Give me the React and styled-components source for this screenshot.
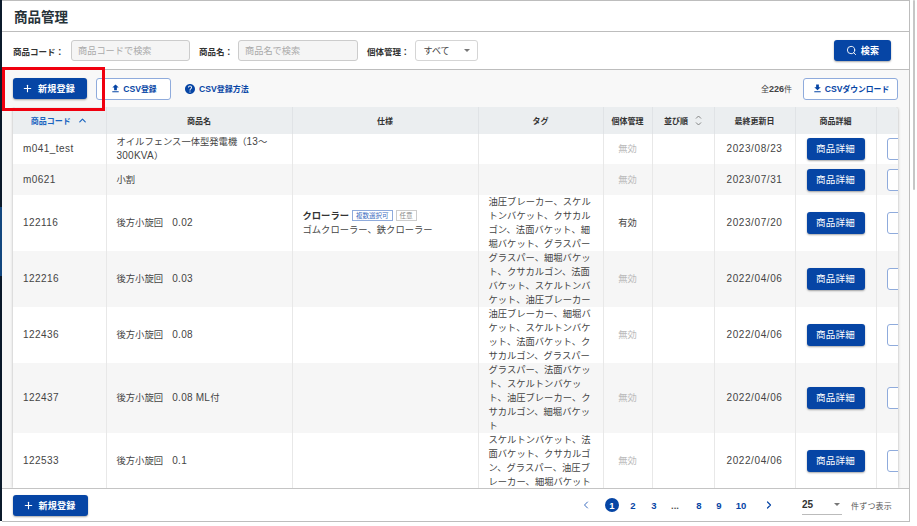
import styled, { createGlobalStyle } from "styled-components";
import { ChevronLeft, ChevronRight, ChevronUp, Plus, Search } from "lucide-react";
import { MdFileDownload, MdFileUpload, MdHelp } from "react-icons/md";

const GlobalStyle = createGlobalStyle`
    html, body {
        margin: 0;
        background: #fff;
        overflow: hidden;
    }
    * {
        box-sizing: border-box;
    }
    body {
        font-family: "Liberation Sans", "Noto Sans CJK JP", sans-serif;
        color: #333;
    }
`;

const Screen = styled.div`
    position: relative;
    display: flex;
    width: 917px;
    height: 526px;
    overflow: hidden;
`;

const SideStrip = styled.div`
    flex: 0 0 2px;
    height: 521px;
    background: linear-gradient(
        #0b1a2b 0,
        #0b1a2b 207px,
        #12477f 207px,
        #12477f 276px,
        #0b1a2b 276px
    );
`;

const Panel = styled.main`
    flex: 0 0 907px;
    height: 522px;
    display: flex;
    flex-direction: column;
    border-top: 1px solid #bdbdbd;
    border-right: 1px solid #bdbdbd;
    border-bottom: 1px solid #bdbdbd;
`;

const TitleBar = styled.header`
    flex: 0 0 31px;
    display: flex;
    align-items: center;
    padding-left: 12px;
    border-bottom: 1px solid #bdbdbd;
`;

const Title = styled.h1`
    margin: 0;
    font-size: 13.5px;
    font-weight: 700;
    color: #263238;
`;

const SearchBar = styled.form`
    flex: 0 0 38px;
    display: flex;
    align-items: center;
    padding: 0 18px 0 11px;
    border-bottom: 1px solid #bdbdbd;
`;

const FieldLabel = styled.label`
    margin-right: ${(p) => p.$gap}px;
    font-size: 8.5px;
    font-weight: 700;
    color: #333;
    white-space: nowrap;
`;

const TextInput = styled.input`
    width: ${(p) => p.$width}px;
    height: 21px;
    margin-right: 9px;
    padding: 0 6px;
    border: 1px solid #ccc;
    border-radius: 3px;
    background: #f5f5f5;
    font: inherit;
    font-size: 9.2px;
    &::placeholder {
        color: #aaa;
    }
`;

const FakeSelect = styled.div`
    display: flex;
    align-items: center;
    justify-content: space-between;
    width: 63px;
    height: 21px;
    padding: 0 7px 0 8px;
    border: 1px solid #d5d5d5;
    border-radius: 3px;
    background: #fff;
    font-size: 9px;
    color: #444;
`;

const Caret = styled.span`
    width: 0;
    height: 0;
    border-left: 3px solid transparent;
    border-right: 3px solid transparent;
    border-top: 3px solid #777;
`;

const PrimaryButton = styled.button`
    display: inline-flex;
    align-items: center;
    justify-content: center;
    gap: ${(p) => p.$gap || 4}px;
    width: ${(p) => p.$width}px;
    height: 21px;
    margin-left: ${(p) => (p.$push ? "auto" : "0")};
    padding: 0 ${(p) => p.$trim || 0}px 0 0;
    border: 0;
    border-radius: 3px;
    background: #0645a5;
    box-shadow: 0 1px 2px rgba(0, 0, 0, 0.35);
    color: #fff;
    font: inherit;
    font-size: 9px;
    font-weight: 700;
    letter-spacing: 0.2px;
`;

const OutlineButton = styled.button`
    display: inline-flex;
    align-items: center;
    justify-content: center;
    gap: 2px;
    width: ${(p) => p.$width}px;
    height: 22px;
    margin-left: ${(p) => p.$left || 0}px;
    padding: 0;
    border: 1px solid #8fabdc;
    border-radius: 3px;
    background: #fff;
    color: #0645a5;
    font: inherit;
    font-size: 7.8px;
    font-weight: 700;
`;

const CsvMark = styled.span`
    font-size: 8.6px;
`;

const Toolbar = styled.div`
    flex: 0 0 37px;
    display: flex;
    align-items: center;
    padding: 0 11px 0 11px;
    background: #f8f8f8;
`;

const HelpLink = styled.a`
    display: inline-flex;
    align-items: center;
    gap: 3px;
    margin-left: 13px;
    color: #0645a5;
    font-size: 8px;
    font-weight: 700;
`;

const CountLabel = styled.span`
    margin-left: auto;
    margin-right: 11px;
    font-size: 8px;
    color: #444;
    b {
        font-size: 9px;
        font-weight: 700;
    }
`;

const TableArea = styled.div`
    flex: 1;
    min-height: 0;
    padding: 0 11px;
    overflow: hidden;
    background: #f8f8f8;
`;

const TableCard = styled.div`
    width: 885px;
    height: 100%;
    overflow: hidden;
    border-radius: 4px 4px 0 0;
    background: #fff;
    box-shadow: 0 0 3px rgba(0, 0, 0, 0.3);
`;

const Table = styled.table`
    width: 885px;
    table-layout: fixed;
    border-collapse: collapse;
    font-size: 9.3px;
`;

const HeadCell = styled.th`
    height: 27px;
    padding: 0;
    background: #ebeef0;
    border-left: 1px solid #e0e3e6;
    color: ${(p) => (p.$active ? "#1a65c0" : "#333")};
    font-size: 8px;
    font-weight: 700;
    text-align: center;
    &:first-child {
        border-left: 0;
    }
`;

const HeadInner = styled.span`
    display: inline-flex;
    align-items: center;
    gap: ${(p) => p.$gap}px;
`;

const Row = styled.tr`
    height: ${(p) => p.$height}px;
    background: ${(p) => (p.$striped ? "#f6f6f6" : "#fff")};
`;

const Cell = styled.td`
    padding: 0 ${(p) => p.$pad ?? 10}px;
    border-left: 1px solid #e8e8e8;
    color: ${(p) => p.$color || "#444"};
    font-size: ${(p) => p.$size || 9.3}px;
    letter-spacing: ${(p) => p.$spacing || 0}px;
    line-height: 14px;
    text-align: ${(p) => p.$align || "left"};
    vertical-align: middle;
    &:first-child {
        border-left: 0;
    }
`;

const Latin = styled.span`
    font-size: 10px;
    letter-spacing: 0.25px;
`;

const ClipCell = styled.td`
    padding: 0 0 0 10px;
    border-left: 1px solid #e8e8e8;
    overflow: hidden;
`;

const DetailButton = styled(PrimaryButton)`
    display: flex;
    margin: 0 auto;
    width: 58px;
    height: 22px;
    font-size: 9.5px;
    font-weight: 400;
    letter-spacing: 0.3px;
`;

const StubButton = styled.div`
    width: 30px;
    height: 22px;
    border: 1px solid #8fabdc;
    border-radius: 3px;
    background: #fff;
`;

const SpecName = styled.b`
    font-weight: 700;
    color: #333;
    margin-right: 3px;
`;

const Badge = styled.span`
    display: inline-block;
    margin-right: 3px;
    padding: 0 3px;
    height: 11px;
    line-height: 9px;
    border: 1px solid ${(p) => (p.$blue ? "#8fabdc" : "#ccc")};
    color: ${(p) => (p.$blue ? "#3a6cc0" : "#888")};
    font-size: 6.5px;
    vertical-align: 1px;
`;

const Footer = styled.footer`
    flex: 0 0 33px;
    display: flex;
    align-items: center;
    padding: 0 11px;
    background: #fff;
    border-top: 1px solid #c4c4c4;
`;

const Pager = styled.nav`
    display: flex;
    align-items: center;
    margin-left: auto;
    color: #0645a5;
`;

const PrevIcon = styled(ChevronLeft)`
    margin-right: 13px;
    color: #3a6cc0;
`;

const PageNum = styled.span`
    display: flex;
    align-items: center;
    justify-content: center;
    width: ${(p) => p.$width || 14}px;
    height: 14px;
    margin-right: ${(p) => p.$gap ?? 7}px;
    border-radius: 50%;
    background: ${(p) => (p.$current ? "#0645a5" : "transparent")};
    color: ${(p) => (p.$current ? "#fff" : p.$muted ? "#555" : "#0645a5")};
    font-size: 9.5px;
    font-weight: 700;
`;

const PageSize = styled.div`
    display: flex;
    align-items: center;
    justify-content: space-between;
    width: 40px;
    height: 20px;
    margin: 0 9px 0 27px;
    padding: 0 2px 0 0;
    border-bottom: 1px solid #bbb;
    font-size: 10px;
    font-weight: 700;
    color: #333;
`;

const PerPageLabel = styled.span`
    margin-right: 6px;
    font-size: 8px;
    color: #555;
    letter-spacing: 0.2px;
`;

const Gutter = styled.div`
    flex: 1;
    padding: 0 3px 0 3px;
`;

const ScrollThumb = styled.div`
    width: 2px;
    height: 190px;
    border-radius: 1px;
    background: #c6c6c6;
`;

// 赤枠はスクリーンショット上の注釈
const Callout = styled.div`
    position: absolute;
    left: 2px;
    top: 67px;
    width: 103px;
    height: 44px;
    border: 3px solid #f0000f;
    pointer-events: none;
`;

const rows = [
    { code: "m041_test", name: <>オイルフェンス一体型発電機（<Latin>13</Latin>〜<Latin>300KVA</Latin>）</>, tag: "", valid: false, date: "2023/08/23", height: 30 },
    { code: "m0621", name: "小割", tag: "", valid: false, date: "2023/07/31", height: 31 },
    { code: "122116", name: <>後方小旋回　<Latin>0.02</Latin></>, spec: true, tag: "油圧ブレーカー、スケルトンバケット、クサカルゴン、法面バケット、細堀バケット、グラスパー", valid: true, date: "2023/07/20", height: 56 },
    { code: "122216", name: <>後方小旋回　<Latin>0.03</Latin></>, tag: "グラスパー、細堀バケット、クサカルゴン、法面バケット、スケルトンバケット、油圧ブレーカー", valid: false, date: "2022/04/06", height: 56 },
    { code: "122436", name: <>後方小旋回　<Latin>0.08</Latin></>, tag: "油圧ブレーカー、細堀バケット、スケルトンバケット、法面バケット、クサカルゴン、グラスパー", valid: false, date: "2022/04/06", height: 56 },
    { code: "122437", name: <>後方小旋回　<Latin>0.08 ML</Latin>付</>, tag: "グラスパー、法面バケット、スケルトンバケット、油圧ブレーカー、クサカルゴン、細堀バケット", valid: false, date: "2022/04/06", height: 70 },
    { code: "122533", name: <>後方小旋回　<Latin>0.1</Latin></>, tag: "スケルトンバケット、法面バケット、クサカルゴン、グラスパー、油圧ブレーカー、細堀バケット", valid: false, date: "2022/04/06", height: 56 },
];

const columnWidths = [93, 186, 186, 125, 49, 62, 81, 81, 22];

function SortIcon() {
    return (
        <svg width="7" height="11" viewBox="0 0 7 11" fill="none" stroke="#777" strokeWidth="0.9">
            <path d="M1 3.5 3.5 1 6 3.5" />
            <path d="M1 7.5 3.5 10 6 7.5" />
        </svg>
    );
}

function ProductRow({ row, striped }) {
    return (
        <Row $height={row.height} $striped={striped}>
            <Cell $size={10} $spacing={0.45}>{row.code}</Cell>
            <Cell>{row.name}</Cell>
            <Cell>
                {row.spec && (
                    <>
                        <SpecName>クローラー</SpecName>
                        <Badge $blue>複数選択可</Badge>
                        <Badge>任意</Badge>
                        <br />
                        ゴムクローラー、鉄クローラー
                    </>
                )}
            </Cell>
            <Cell>{row.tag}</Cell>
            <Cell $align="center" $pad={0} $color={row.valid ? "#444" : "#bbb"}>
                {row.valid ? "有効" : "無効"}
            </Cell>
            <Cell />
            <Cell $align="center" $pad={0} $size={10} $spacing={0.6}>{row.date}</Cell>
            <Cell $pad={0}>
                <DetailButton type="button">商品詳細</DetailButton>
            </Cell>
            <ClipCell>
                <StubButton />
            </ClipCell>
        </Row>
    );
}

export default function App() {
    return (
        <Screen>
            <GlobalStyle />
            <SideStrip />
            <Panel>
                <TitleBar>
                    <Title>商品管理</Title>
                </TitleBar>
                <SearchBar>
                    <FieldLabel $gap={7}>商品コード：</FieldLabel>
                    <TextInput $width={119} placeholder="商品コードで検索" />
                    <FieldLabel $gap={5}>商品名：</FieldLabel>
                    <TextInput $width={120} placeholder="商品名で検索" />
                    <FieldLabel $gap={5}>個体管理：</FieldLabel>
                    <FakeSelect>
                        すべて
                        <Caret />
                    </FakeSelect>
                    <PrimaryButton type="button" $width={57} $push>
                        <Search size={11} strokeWidth={2} />
                        検索
                    </PrimaryButton>
                </SearchBar>
                <Toolbar>
                    <PrimaryButton type="button" $width={74} $gap={5} $trim={3}>
                        <Plus size={11} strokeWidth={2.4} />
                        新規登録
                    </PrimaryButton>
                    <OutlineButton type="button" $width={75} $left={9}>
                        <MdFileUpload size={11} />
                        <span><CsvMark>CSV</CsvMark>登録</span>
                    </OutlineButton>
                    <HelpLink>
                        <MdHelp size={12} />
                        <span><CsvMark>CSV</CsvMark>登録方法</span>
                    </HelpLink>
                    <CountLabel>
                        全<b>226</b>件
                    </CountLabel>
                    <OutlineButton type="button" $width={95}>
                        <MdFileDownload size={11} />
                        <span><CsvMark>CSV</CsvMark>ダウンロード</span>
                    </OutlineButton>
                </Toolbar>
                <TableArea>
                    <TableCard>
                        <Table>
                            <colgroup>
                                {columnWidths.map((width, i) => (
                                    <col key={i} width={width} />
                                ))}
                            </colgroup>
                            <thead>
                                <tr>
                                    <HeadCell $active>
                                        <HeadInner $gap={6}>
                                            商品コード
                                            <ChevronUp size={11} strokeWidth={2.6} />
                                        </HeadInner>
                                    </HeadCell>
                                    <HeadCell>商品名</HeadCell>
                                    <HeadCell>仕様</HeadCell>
                                    <HeadCell>タグ</HeadCell>
                                    <HeadCell>個体管理</HeadCell>
                                    <HeadCell>
                                        <HeadInner $gap={7}>
                                            並び順
                                            <SortIcon />
                                        </HeadInner>
                                    </HeadCell>
                                    <HeadCell>最終更新日</HeadCell>
                                    <HeadCell>商品詳細</HeadCell>
                                    <HeadCell />
                                </tr>
                            </thead>
                            <tbody>
                                {rows.map((row, i) => (
                                    <ProductRow key={row.code} row={row} striped={i % 2 === 1} />
                                ))}
                            </tbody>
                        </Table>
                    </TableCard>
                </TableArea>
                <Footer>
                    <PrimaryButton type="button" $width={75} $gap={5} $trim={3}>
                        <Plus size={11} strokeWidth={2.4} />
                        新規登録
                    </PrimaryButton>
                    <Pager>
                        <PrevIcon size={12} strokeWidth={2} />
                        <PageNum $current>1</PageNum>
                        <PageNum>2</PageNum>
                        <PageNum>3</PageNum>
                        <PageNum $muted $gap={10}>...</PageNum>
                        <PageNum $gap={6}>8</PageNum>
                        <PageNum $gap={6}>9</PageNum>
                        <PageNum $width={18} $gap={13}>10</PageNum>
                        <ChevronRight size={12} strokeWidth={2.4} />
                    </Pager>
                    <PageSize>
                        25
                        <Caret />
                    </PageSize>
                    <PerPageLabel>件ずつ表示</PerPageLabel>
                </Footer>
            </Panel>
            <Gutter>
                <ScrollThumb />
            </Gutter>
            <Callout />
        </Screen>
    );
}
